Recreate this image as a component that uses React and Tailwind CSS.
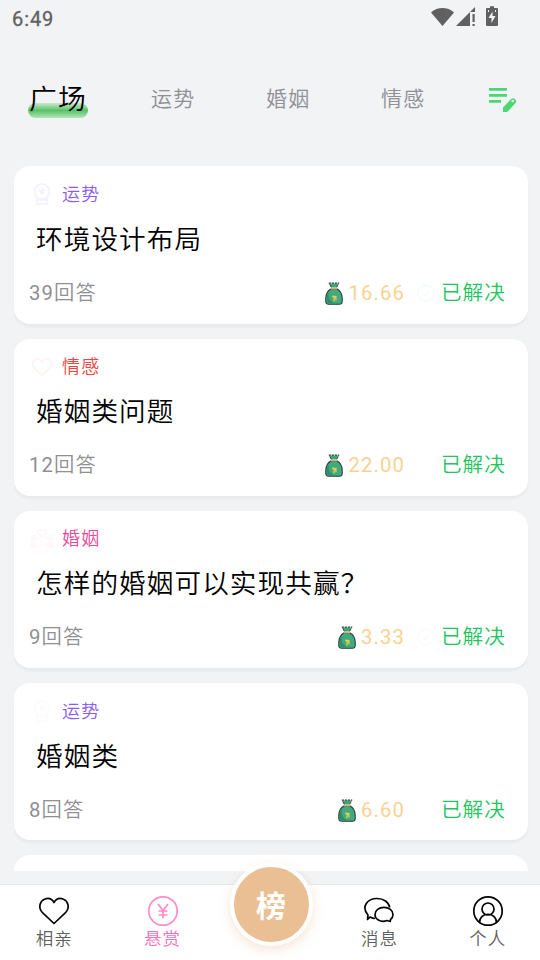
import React from 'react';

const CARDS = [
  { kind: 'luck', tag: '运势', color: 'text-[#8b5cf6]', title: '环境设计布局', answers: 39, price: '16.66', icon: 'text-[#f3f1fe]', check: 'text-[#f1fcf8]' },
  { kind: 'heart', tag: '情感', color: 'text-[#ef4444]', title: '婚姻类问题', answers: 12, price: '22.00', icon: 'text-[#fff3f2]', check: 'text-[#fbfffd]' },
  { kind: 'couple', tag: '婚姻', color: 'text-[#ec4899]', title: '怎样的婚姻可以实现共赢？', answers: 9, price: '3.33', icon: 'text-[#fef7fb]', check: 'text-[#f8fdfb]' },
  { kind: 'luck', tag: '运势', color: 'text-[#8b5cf6]', title: '婚姻类', answers: 8, price: '6.60', icon: 'text-[#fcfbff]', check: 'text-[#fefffe]' },
];

function StatusBar() {
  return (
    <header className="flex h-9 items-center justify-between pl-3 pr-[41px] text-[#606060]">
      <span className="pt-[2px] text-[20px] font-normal leading-6 tracking-[0.9px] [-webkit-text-stroke:0.3px_#606060]">6:49</span>
      <svg width="68" height="22" viewBox="0 0 68 22" fill="currentColor" className="mb-[2px]">
        <path d="M0 6.500C6.500.6 16.500.6 23 6.500L11.500 20Z" />
        <path d="M25 20 44 1V6L39 6V20ZM41.500 8h2.200v8h-2.200ZM41.500 18h2.200v2h-2.200Z" />
        <path fillRule="evenodd" d="M56 2H59V.3h4V2h3Q67 2 67 3V19Q67 20 66 20H56Q55 20 55 19V3Q55 2 56 2ZM61.500 5.500 57.500 12H60.500V17L64.500 10H61.500ZM57 4v2h1V4ZM64 4v2h1V4Z" />
      </svg>
    </header>
  );
}

function TopTabs() {
  return (
    <nav className="flex h-[130px] items-start pt-[42px] text-[21px] leading-[42px] tracking-[1.200px] text-[#8f8f94]">
      <div className="relative ml-[28px] h-[42px] w-[60px] text-[27.800px] leading-[44px] text-black">
        <div className="absolute left-0 top-[25px] h-[15px] w-[60px] rounded-full bg-[linear-gradient(to_bottom,#c9e8cc,#58c366_50%,#b4e3ba)]" />
        <span className="relative pl-[1px]">广场</span>
      </div>
      <span className="ml-[63px] w-[115px]">运势</span>
      <span className="w-[115px]">婚姻</span>
      <span className="w-[107px]">情感</span>
      <svg width="30" height="28" viewBox="0 0 30 28" className="mt-[8px] text-[#4bd870]" fill="currentColor">
        <path d="M1 2h18v2.700H1ZM1 8h18v2.700H1ZM1 14h12v2.700H1Z" />
        <path fillRule="evenodd" d="M15 21.500 23.200 13Q25 11.300 26.700 13l.8.800Q29 15.300 27.500 17L19.200 26H15ZM23.500 15a1.200 1.200 0 1 0 2.400 0a1.200 1.200 0 1 0-2.400 0" />
      </svg>
    </nav>
  );
}

function TagIcon({ kind, className }) {
  return (
    <svg width="24" height="24" viewBox="0 0 24 24" fill="none" stroke="currentColor" strokeWidth="1.700" className={className}>
      {kind === 'luck' && (
        <>
          <circle cx="12" cy="9.500" r="7.500" />
          <path d="M7 15.500V22.500l5-1.200 5 1.200V15.500M7 18h10" />
          <path fill="currentColor" stroke="none" d="m12 5.800 1.100 2.300 2.500.3-1.800 1.700.5 2.500-2.300-1.200-2.300 1.200.5-2.500-1.800-1.700 2.500-.3Z" />
        </>
      )}
      {kind === 'heart' && (
        <path d="M12 20.500 4.200 12.800C1.500 10 2 6.200 4.600 4.800 7.500 3.200 10.300 4.300 12 6.800c1.700-2.500 4.500-3.600 7.400-2 2.600 1.400 3.100 5.200.4 8Z" />
      )}
      {kind === 'couple' && (
        <>
          <path d="m12 10-4-3.800C6.500 3.800 10 1.200 12 4c2-2.800 5.500-.2 4 2.200Z" />
          <path fill="currentColor" stroke="none" d="M1 11a3 3 0 1 1 6 0a3 3 0 1 1-6 0M17 11a3 3 0 1 1 6 0a3 3 0 1 1-6 0M0 21v-3q0-3 4-3 3 0 4 2.500h8Q17 15 20 15q4 0 4 3v3h-8v-2H8v2Z" />
        </>
      )}
    </svg>
  );
}

function MoneyBag() {
  return (
    <svg width="18" height="23" viewBox="0 0 19 24" preserveAspectRatio="none" className="mr-[5px] mt-px">
      <path d="M4.500 1.500H14l-1.800 4.200H6.500Z" fill="#3ba77a" />
      <path d="M4 1.200h11" stroke="#263e3b" strokeWidth="1.400" strokeDasharray="2.200 1" />
      <path d="M5 2.500 6.700 5.500M14 2.500 12.300 5.500" stroke="#263e3b" />
      <path d="M6.500 7C3 9 .8 12.500.8 17v3q0 3.200 3.200 3.200h11q3.200 0 3.200-3.200v-3C18.200 12.500 16 9 12.500 7Z" fill="#43aa80" stroke="#263e3b" strokeWidth="1.100" />
      <path d="M2 14v5q0 3 3 3h4Q3 19 4 11Z" fill="#318d69" />
      <path d="M6 6.700h7" stroke="#eda66b" strokeWidth="1.600" />
      <path d="m7.700 14.500 2 1.500 2.500-1M9.500 14V20M11.500 16v3" fill="none" stroke="#efd348" strokeWidth="1.300" />
    </svg>
  );
}

function QuestionCard({ card }) {
  return (
    <article className="mb-[15px] flex h-[157.300px] shrink-0 flex-col rounded-[16px] bg-white shadow-[0_3px_2px_#e9eaed]">
      <div className="flex h-[56px] items-center pl-[15.500px]">
        <TagIcon kind={card.kind} className={card.icon} />
        <span className={`ml-[8.500px] pt-[1px] text-[18px] leading-6 tracking-[1.200px] ${card.color}`}>{card.tag}</span>
      </div>
      <h2 className="h-[54px] pl-[22px] pt-[0.500px] text-[26.600px] leading-[34px] tracking-[1.100px] text-black">{card.title}</h2>
      <div className="flex h-[33px] items-center pl-[15px] pr-[22px] text-[20.300px] leading-[30px] tracking-[1.100px]">
        <span className="flex-1 text-[#8f8f94]"><span className="font-normal">{card.answers}</span><span className="tracking-[1.300px]">回答</span></span>
        <MoneyBag />
        <span className="font-normal text-[#f9d293]">{card.price}</span>
        <svg width="18" height="18" viewBox="0 0 18 18" fill="none" stroke="currentColor" strokeWidth="1.500" className={`ml-[12px] mr-[6px] ${card.check}`}>
          <circle cx="9" cy="9" r="8" />
          <path d="m5.500 9 2.500 2.500 4.500-5" />
        </svg>
        <span className="text-[20.600px] tracking-[1.100px] text-[#22c55e]">已解决</span>
      </div>
    </article>
  );
}

function NavItem({ label, active, children }) {
  return (
    <div className={`flex flex-1 flex-col items-center pt-[10px] ${active ? 'text-[#ff70b8]' : 'text-[#606060]'}`}>
      <svg width="32" height="32" viewBox="0 0 32 32" fill="none" stroke={active ? '#ff8cc6' : '#050505'} strokeWidth="1.700" strokeLinejoin="round">
        {children}
      </svg>
      <span className="pt-px text-[17.500px] leading-[22px] tracking-[1px]">{label}</span>
    </div>
  );
}

function BottomNav() {
  return (
    <footer className="flex h-[76px] border-t border-[#e9e9ea] bg-white">
      <div className="flex w-[542px] shrink-0">
        <NavItem label="相亲">
          <path d="M16 28.500 4.200 17.300C-.1 12.500 2 5.800 6.500 4.200 10.500 2.500 14 4 16 7.500c2-3.500 5.500-5 9.500-3.300 4.500 1.600 6.600 8.300 2.300 13.100Z" />
        </NavItem>
        <NavItem label="悬赏" active>
          <circle cx="16" cy="16" r="14.200" />
          <path d="m11 9 5 6.500L21 9M16 15.500V23.500M11.500 16h9M11.500 20h9" />
        </NavItem>
        <div className="flex flex-1 justify-center">
          <button className="-mt-[22px] h-[83px] w-[83px] shrink-0 rounded-full border-4 border-white bg-[#ebbf94] pt-[2px] text-[30px] font-bold leading-[75px] text-white shadow-[0_4px_12px_#ebbf9466]">榜</button>
        </div>
        <NavItem label="消息">
          <path d="M12 23.500c-2 0-3.500-.7-5-1.500L4.500 24.500 5 20C-2 12 4 3.500 14 3.500c6.500 0 12 3.500 12.700 9" />
          <path d="M27.200 26.500 24 25.500C18 28 12 24.500 12 19.500c0-4 4-7.200 9-7.200s9 3.200 9 7.200c0 2-.8 3.800-2.500 5Z" />
        </NavItem>
        <NavItem label="个人">
          <circle cx="16" cy="16" r="14.200" />
          <circle cx="16" cy="14" r="6" />
          <path d="M7.500 27.500c0-11 17-11 17 0" />
        </NavItem>
      </div>
    </footer>
  );
}

export default function App() {
  return (
    <div className="flex h-[960px] w-[540px] flex-col overflow-hidden bg-[#f1f3f5] font-['Roboto','Noto_Sans_CJK_SC',sans-serif] font-[350]">
      <StatusBar />
      <TopTabs />
      <main className="mb-[13px] flex h-[705px] flex-col overflow-hidden pl-[14px] pr-[12px] pt-[0.300px]">
        {CARDS.map((card) => <QuestionCard key={card.title} card={card} />)}
        <div className="h-[158px] shrink-0 rounded-[16px] bg-white" />
      </main>
      <BottomNav />
    </div>
  );
}
